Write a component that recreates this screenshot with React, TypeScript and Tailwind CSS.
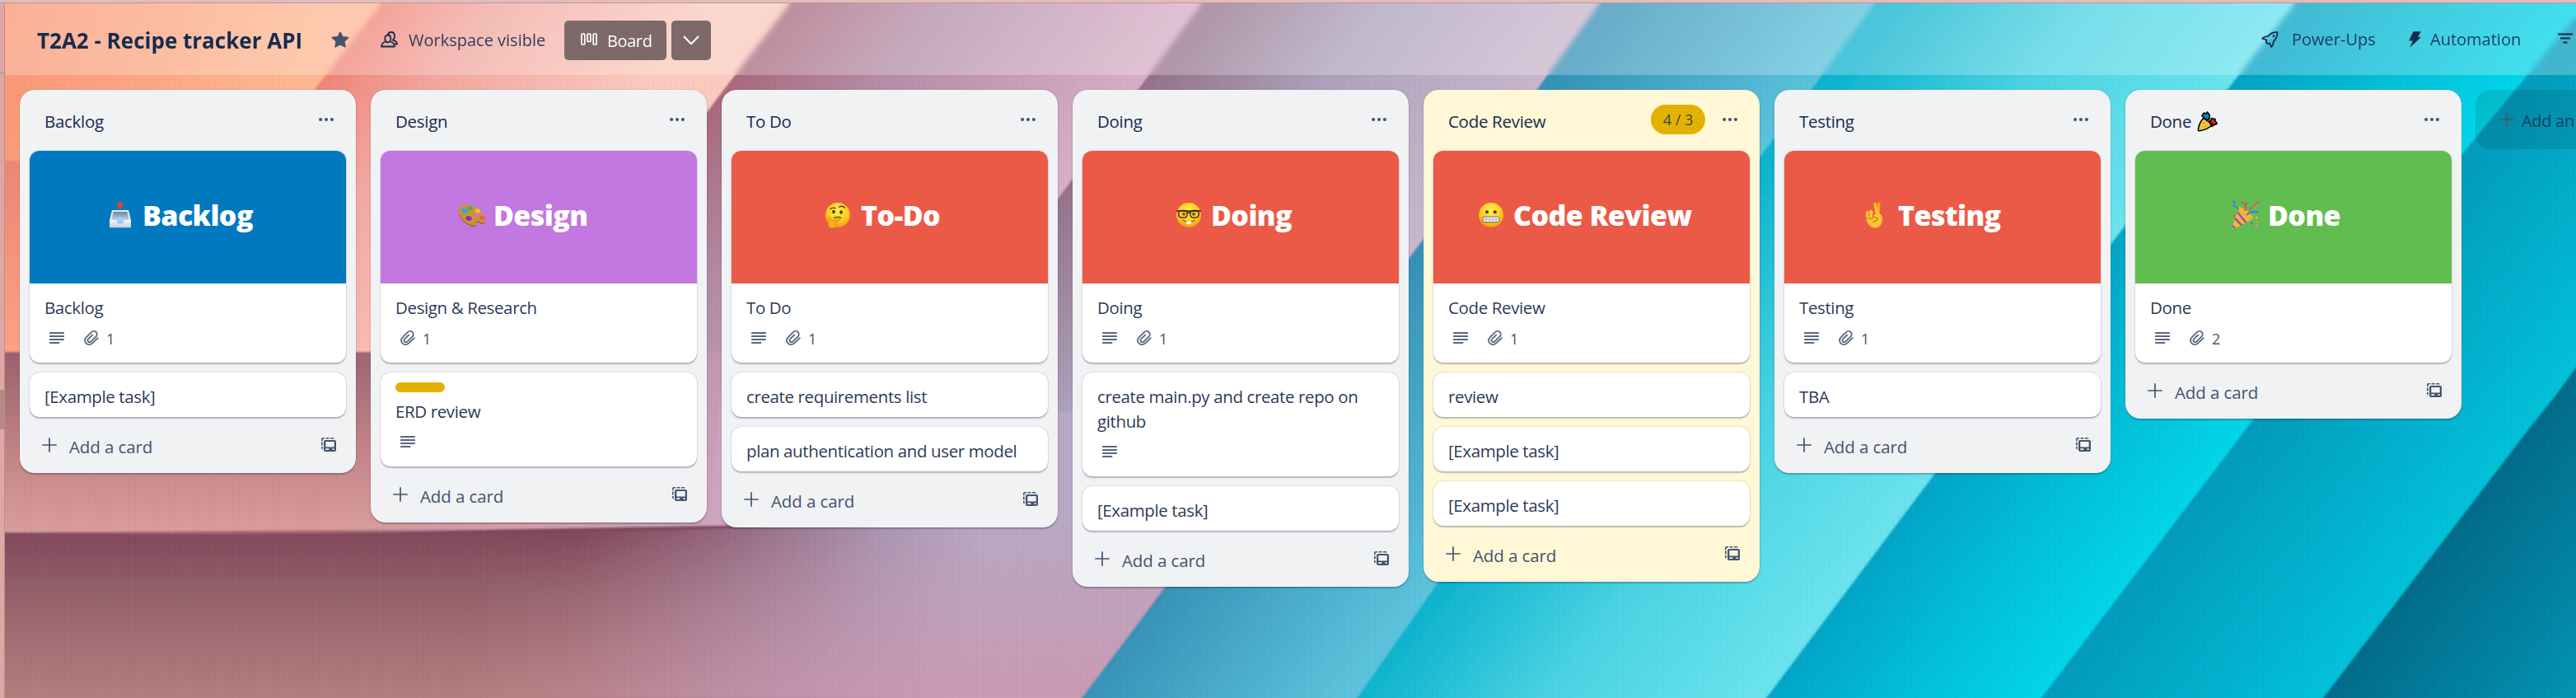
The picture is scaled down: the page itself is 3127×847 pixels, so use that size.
import React from "react";

type CoverName = "inbox" | "palette" | "think" | "nerd" | "grimace" | "fingers" | "party";

interface CardData {
  text: string;
  cover?: { bg: string; label: string; emoji: CoverName; pad: string; gap: string };
  label?: boolean;
  desc?: boolean;
  attachments?: number;
}

interface ListData {
  title: string;
  warn?: boolean;
  badge?: string;
  party?: boolean;
  cards: CardData[];
}

const LISTS: ListData[] = [
  {
    title: "Backlog",
    cards: [
      { text: "Backlog", desc: true, attachments: 1, cover: { bg: "bg-[#0079bf]", label: "Backlog", emoji: "inbox", pad: "pl-[93px]", gap: "gap-[10px]" } },
      { text: "[Example task]" },
    ],
  },
  {
    title: "Design",
    cards: [
      { text: "Design & Research", attachments: 1, cover: { bg: "bg-[#c377e0]", label: "Design", emoji: "palette", pad: "pl-[93px]", gap: "gap-[10px]" } },
      { text: "ERD review", label: true, desc: true },
    ],
  },
  {
    title: "To Do",
    cards: [
      { text: "To Do", desc: true, attachments: 1, cover: { bg: "bg-[#eb5a46]", label: "To-Do", emoji: "think", pad: "pl-[112px]", gap: "gap-[11px]" } },
      { text: "create requirements list" },
      { text: "plan authentication and user model" },
    ],
  },
  {
    title: "Doing",
    cards: [
      { text: "Doing", desc: true, attachments: 1, cover: { bg: "bg-[#eb5a46]", label: "Doing", emoji: "nerd", pad: "pl-[112px]", gap: "gap-[10px]" } },
      { text: "create main.py and create repo on github", desc: true },
      { text: "[Example task]" },
    ],
  },
  {
    title: "Code Review",
    warn: true,
    badge: "4 / 3",
    cards: [
      { text: "Code Review", desc: true, attachments: 1, cover: { bg: "bg-[#eb5a46]", label: "Code Review", emoji: "grimace", pad: "pl-[53px]", gap: "gap-[10px]" } },
      { text: "review" },
      { text: "[Example task]" },
      { text: "[Example task]" },
    ],
  },
  {
    title: "Testing",
    cards: [
      { text: "Testing", desc: true, attachments: 1, cover: { bg: "bg-[#eb5a46]", label: "Testing", emoji: "fingers", pad: "pl-[92px]", gap: "gap-[12px]" } },
      { text: "TBA" },
    ],
  },
  {
    title: "Done",
    party: true,
    cards: [
      { text: "Done", desc: true, attachments: 2, cover: { bg: "bg-[#61bd4f]", label: "Done", emoji: "party", pad: "pl-[117px]", gap: "gap-[10px]" } },
    ],
  },
];

function Emoji({ name }: { name: CoverName }) {
  const cls = "h-[34px] w-[34px] shrink-0";
  switch (name) {
    case "inbox":
      return (
        <svg className={cls} viewBox="0 0 34 34">
          <defs>
            <linearGradient id="in-a" x1="0" y1="0" x2="0" y2="1"><stop offset="0" stopColor="#6c8196" /><stop offset="1" stopColor="#c6dcf2" /></linearGradient>
            <linearGradient id="in-b" x1="0" y1="0" x2="0" y2="1"><stop offset="0" stopColor="#f4f6f8" /><stop offset="1" stopColor="#c9ced4" /></linearGradient>
          </defs>
          <path d="M7 11h20l3 12v9H4v-9z" fill="#e4e8ec" />
          <path d="M8.6 13h16.800l2.200 10.500H6.400z" fill="url(#in-a)" />
          <path d="M4 23h8.500c.6 3 2.200 4.600 4.500 4.600s4-1.600 4.500-4.600H30v9.200H4z" fill="url(#in-b)" />
          <circle cx="17" cy="24" r="4.400" fill="#a9cdf3" />
          <path d="M14.300 1h5v3.800h2.900L17 9.800l-5.200-5h2.500z" fill="#e0432d" />
        </svg>
      );
    case "palette":
      return (
        <svg className={cls} viewBox="0 0 34 34">
          <path d="M2 9C5 4 13 4 20 6.500S34 17 34 24c0 3-4 3.500-7 1.500-2.500-1.600-4.500-.5-4 1.500.6 2.300-2 3.400-5.500 2.500C9 27 0 17 2 9z" fill="#7c5518" transform="translate(0,1)" />
          <path d="M2 9C5 4 13 4 20 6.500S34 17 34 24c0 3-4 3.500-7 1.500-2.500-1.600-4.500-.5-4 1.500.6 2.300-2 3.400-5.500 2.500C9 27 0 17 2 9z" fill="#cf9233" />
          <circle cx="24" cy="18" r="2.400" fill="#c377e0" />
          <ellipse cx="9" cy="12" rx="4" ry="2.900" fill="#27a9dd" transform="rotate(25 9 12)" />
          <ellipse cx="15.500" cy="8.500" rx="3.300" ry="2.600" fill="#2fbf3f" />
          <ellipse cx="25" cy="12" rx="3.300" ry="2.500" fill="#f1c22c" transform="rotate(25 25 12)" />
          <ellipse cx="30" cy="20" rx="3" ry="2.500" fill="#ef5a4a" />
          <ellipse cx="14" cy="21" rx="3.800" ry="2.800" fill="#8a2fc4" transform="rotate(20 14 21)" />
        </svg>
      );
    case "think":
    case "nerd":
    case "grimace":
      return (
        <svg className={cls} viewBox="0 0 34 34">
          <defs>
            <radialGradient id={"face-" + name} cx=".5" cy=".35" r=".65"><stop offset="0" stopColor="#ffee50" /><stop offset=".65" stopColor="#fdcb1e" /><stop offset="1" stopColor="#f09a13" /></radialGradient>
          </defs>
          <circle cx="17" cy="17" r="15" fill={"url(#face-" + name + ")"} />
          {name === "think" && (
            <g>
              <ellipse cx="12" cy="13" rx="1.800" ry="2.300" fill="#5b3210" />
              <ellipse cx="21" cy="13.500" rx="1.800" ry="2.300" fill="#5b3210" />
              <path d="M8 9.500c1.500-1.300 4-1.700 6-.8M18.500 7.200c2.500-1.400 5.200-1 6.800.8" stroke="#5b3210" strokeWidth="1.300" fill="none" strokeLinecap="round" />
              <path d="M12.500 20.500c3-1.600 6-1.400 8.500 0" stroke="#5b3210" strokeWidth="1.200" fill="none" strokeLinecap="round" />
              <path d="M5.500 21.500c-.3-2 2.300-2.600 3 0l.6 2.500 8.500-2.600c2.200-.4 2.800 1.800 1 2.500l-4.400 1.700c2.500.6 2 5.400-1.500 6.600-5 1.600-7.600-1.200-7.300-5z" fill="#fbb01c" stroke="#d9820c" strokeWidth=".9" />
            </g>
          )}
          {name === "nerd" && (
            <g>
              <rect x="4.800" y="11.500" width="10.400" height="8.600" rx="3.800" fill="#fbc83c" stroke="#2d2418" strokeWidth="1.400" />
              <rect x="18.800" y="11.500" width="10.400" height="8.600" rx="3.800" fill="#fbc83c" stroke="#2d2418" strokeWidth="1.400" />
              <path d="M2 12h30M15 14h4" stroke="#2d2418" strokeWidth="1.400" />
              <circle cx="11" cy="15.800" r="2" fill="#8a5018" />
              <circle cx="23" cy="15.800" r="2" fill="#8a5018" />
              <path d="M9.500 23c4 3.300 11 3.300 15 0" stroke="#a0601c" strokeWidth="1.100" fill="none" strokeLinecap="round" />
              <rect x="14.200" y="24.500" width="5.600" height="3.600" rx=".8" fill="#fff" />
            </g>
          )}
          {name === "grimace" && (
            <g>
              <circle cx="12" cy="13.200" r="2" fill="#5b3210" />
              <circle cx="21.800" cy="13.200" r="2" fill="#5b3210" />
              <rect x="6.800" y="19" width="20.400" height="6.600" rx="2.800" fill="#f4f4f4" stroke="#85786c" strokeWidth="1.100" />
              <path d="M7 22.300h20M11 19v6.500M15 19v6.500M19 19v6.500M23 19v6.500" stroke="#a9a39c" strokeWidth=".8" />
            </g>
          )}
        </svg>
      );
    case "fingers":
      return (
        <svg className={cls} viewBox="0 0 34 34">
          <path d="M19 15l2.200-12c.4-2.200 3.300-2 3.200.4L23.800 17z" fill="#f3a81d" />
          <path d="M16.300 3.300c-.2-2.100 2.400-2.700 3.200-.9l5 14.600-5.500 2z" fill="#fbc02f" stroke="#d88d13" strokeWidth=".6" />
          <path d="M7 14c0-2.200 3.800-2.200 4 0v2.500c.3-1.300 0-3.500 0-4 .2-2.300 4-2.300 4.300 0l.6 4.500c5-2 10-2.500 10.800 1.500.8 5-.5 9.500-3 12-3.500 2.800-9 2.500-12-.5C8.500 27 7 22 7 14z" fill="#fcc534" />
          <path d="M11 15v4M15.500 16l.3 3M8 20.500c3 1.500 5.500 1.500 8-.5 3-1 5 0 5.500 1.800-1.300 2-3.600 2.200-5.500 3.700" stroke="#c47a10" strokeWidth="1.200" fill="none" strokeLinecap="round" />
        </svg>
      );
    case "party":
      return (
        <svg className={cls} viewBox="0 0 34 34">
          <defs><clipPath id="cone"><path d="M9 7c7 2 15 8 17.500 13.500C20 26 8 31 2 33.500c-1.300.4-1.600-.2-1.500-1.500z" /></clipPath></defs>
          <g clipPath="url(#cone)">
            <path d="M0 0h34v34H0z" fill="#f4b52e" />
            <path d="M2 19l12 12M5 11l14 17M-2 27l9 9" stroke="#9a4fc9" strokeWidth="2.600" />
          </g>
          <path d="M18 17c4-4 9-4.500 15-4" stroke="#3a84dd" strokeWidth="2.200" fill="none" />
          <path d="M16 12c2-5 1-9-4-11" stroke="#e84a6a" strokeWidth="2" fill="none" />
          <path d="M22 12c0-4 3-3 3.500-5.500S29 6 29 3.500 32 3 33 1" stroke="#e84a6a" strokeWidth="1.500" fill="none" />
          <path d="M1 1c3-.5 4 1.500 2.500 3S2 7 5 7s2 3 4 3" stroke="#3a84dd" strokeWidth="1.600" fill="none" />
          <g>
            <circle cx="18" cy="3" r="1.300" fill="#3a84dd" /><circle cx="3" cy="18" r="1.300" fill="#e84a6a" />
            <circle cx="30" cy="20" r="1.300" fill="#e8d23a" /><circle cx="24" cy="27" r="1.300" fill="#3a84dd" />
            <circle cx="30" cy="30" r="1.500" fill="#f08aa8" /><circle cx="30" cy="25" r="1.200" fill="#f08a3a" />
          </g>
        </svg>
      );
  }
}

const PartyGlyph = () => (
  <svg className="ml-[7px] h-[25px] w-[25px]" viewBox="0 0 25 25">
    <path d="M7.500 8.500c4 1.500 9 5.500 10 9-4 3.500-9.500 5.500-14.500 6.300-1.300.1-1.700-.6-1.600-1.600C2 17 4.500 12 7.500 8.500z" fill="#fcc03a" stroke="#000" strokeWidth="1.600" strokeLinejoin="round" />
    <path d="M9 8.500L5.800 5.500 8.500 2l2.500 1L12.500.8l3 4.200-.6 4-3.400 1.500z" fill="#157fa8" stroke="#000" strokeWidth="1.500" strokeLinejoin="round" />
    <path d="M15.500 13.500l2-5 4.500 1 .4 2.500 2 3-4.400 2.200z" fill="#cc2412" stroke="#000" strokeWidth="1.500" strokeLinejoin="round" />
    <path d="M11 11l3.500-1.500 1.500 4zM17 16.500l2.500 1-1.500 1.700z" fill="#7a4fb0" stroke="#000" strokeWidth="1" />
    <circle cx="8.500" cy="14" r="1" fill="#f07a30" /><circle cx="10" cy="18" r="1" fill="#6cc0a0" />
  </svg>
);

const Dots = () => (
  <svg className="h-[6px] w-[18px]" viewBox="0 0 18 6" fill="#44546f">
    <circle cx="2.100" cy="3" r="2.100" /><circle cx="9" cy="3" r="2.100" /><circle cx="15.900" cy="3" r="2.100" />
  </svg>
);

const DescIcon = () => (
  <svg className="h-[16px] w-[18px]" viewBox="0 0 18 16" stroke="#596780" strokeWidth="1.900" strokeLinecap="round">
    <path d="M.9 2h16.200M.9 6h16.200M.9 10h16.200M.9 14h10.600" />
  </svg>
);

const ClipIcon = () => (
  <svg className="h-[18px] w-[18px]" viewBox="0 0 18 18" fill="none" stroke="#596780" strokeWidth="1.800" strokeLinecap="round">
    <path d="M16.800 9.200l-6.500 6.200c-2.300 2.200-5.700 2.400-7.800.3s-1.900-5.400.3-7.600l5.900-5.800c1.700-1.700 4.300-1.900 5.900-.4s1.500 4-.2 5.700l-5.900 5.700c-1 1-2.500 1.100-3.400.2s-.8-2.300.2-3.300L10.200 5.500" />
  </svg>
);

const Plus = () => (
  <svg className="h-[18px] w-[18px] shrink-0" viewBox="0 0 18 18" stroke="#44546f" strokeWidth="1.700" strokeLinecap="round">
    <path d="M9 .9v16.200M.9 9h16.200" />
  </svg>
);

const TemplateIcon = () => (
  <svg className="h-[18px] w-[18px]" viewBox="0 0 18 18" fill="#44546f">
    <path fillRule="evenodd" d="M5 3h11a2 2 0 0 1 2 2v10a2 2 0 0 1-2 2H5a2 2 0 0 1-2-2V5a2 2 0 0 1 2-2zm.3 2v6.400h10.400V5zm0 8.300v1.700h4v-1.700zm8.200 0v1.700h2.200v-1.700z" />
    <path d="M0 4V2a2 2 0 0 1 2-2h2v1.600H1.700V4zM5.500 0h4v1.600h-4zM11 0h3a2 2 0 0 1 1.900 1.600H11zM0 5.500h1.700v4H0zM0 11h1.700v3.500A2 2 0 0 1 0 12.800z" />
  </svg>
);

function Card({ card }: { card: CardData }) {
  const meta = card.desc || card.attachments;
  return (
    <div className="flex w-[384px] flex-col overflow-hidden rounded-[12px] bg-white shadow-[0_1.500px_1.500px_#091e4240,0_0_1.500px_#091e424f]">
      {card.cover && (
        <div className={"flex h-[161px] items-center pb-[5px] " + card.cover.bg + " " + card.cover.pad + " " + card.cover.gap}>
          <Emoji name={card.cover.emoji} />
          <span className="text-[34px] leading-[40px] font-extrabold tracking-[-0.6px] whitespace-nowrap text-white">{card.cover.label}</span>
        </div>
      )}
      <div className={"flex flex-col pr-[16px] pl-[18px] pt-[12px] " + (meta ? "pb-[6px]" : "pb-[12px]")}>
        {card.label && <span className="mb-[6px] h-[12px] w-[60px] rounded-full bg-[#e2b203]" />}
        <p className="text-[20.5px] leading-[30px] tracking-[-0.38px] text-[#172b4d]/95"><span className="relative top-[2px]">{card.text}</span></p>
        {meta && (
          <div className="flex h-[48px] items-center gap-[24px] pl-[6px]">
            {card.desc && <DescIcon />}
            {card.attachments && (
              <span className="flex items-center gap-[9px] text-[18px] leading-[24px] text-[#44546f]">
                <ClipIcon />
                <span className="pt-[2px]">{card.attachments}</span>
              </span>
            )}
          </div>
        )}
      </div>
    </div>
  );
}

function List({ list }: { list: ListData }) {
  return (
    <section className={"flex w-[408px] shrink-0 flex-col rounded-[18px] px-[12px] shadow-[0_1.500px_1.500px_#091e4240,0_0_1.500px_#091e424f] " + (list.warn ? "bg-[#fff7d6]" : "bg-[#f1f2f4]")}>
      <header className="flex h-[74px] items-center pr-[15px] pb-[3px] pl-[18px]">
        <h2 className="flex flex-1 items-center pt-[5px] text-[20.5px] leading-[30px] font-medium tracking-[-0.3px] text-[#172b4d]">
          {list.title}
          {list.party && <PartyGlyph />}
        </h2>
        {list.badge && (
          <span className="mt-px mr-[21px] flex h-[36px] w-[66px] items-center justify-center rounded-full bg-[#e2b203] text-[18px] text-[#172b4d]/85">{list.badge}</span>
        )}
        <Dots />
      </header>
      <div className="flex flex-col gap-[12px]">
        {list.cards.map((c, i) => (
          <Card key={i} card={c} />
        ))}
      </div>
      <footer className="flex h-[68px] items-center pr-[12px] pl-[15px]">
        <Plus />
        <span className="ml-[15px] flex-1 pt-[4px] text-[20.5px] leading-[30px] tracking-[-0.1px] text-[#44546f]">Add a card</span>
        <TemplateIcon />
      </footer>
    </section>
  );
}

function Wallpaper() {
  return (
    <svg className="absolute inset-0 h-[847px] w-[3127px]" viewBox="0 0 3127 847" preserveAspectRatio="none">
      <defs>
        <linearGradient id="w0" gradientUnits="userSpaceOnUse" x1="0" y1="0" x2="360" y2="120"><stop offset="0" stopColor="#f99472" /><stop offset="1" stopColor="#feb792" /></linearGradient>
        <linearGradient id="w1" gradientUnits="userSpaceOnUse" x1="383" y1="108" x2="640" y2="300"><stop offset="0" stopColor="#f08476" /><stop offset=".35" stopColor="#f2a69f" /><stop offset="1" stopColor="#fbc9bd" /></linearGradient>
        <linearGradient id="w2" gradientUnits="userSpaceOnUse" x1="879" y1="108" x2="1192" y2="352"><stop offset="0" stopColor="#a9677c" /><stop offset=".35" stopColor="#b28ba4" /><stop offset="1" stopColor="#d7aec6" /></linearGradient>
        <linearGradient id="w3" gradientUnits="userSpaceOnUse" x1="1382" y1="108" x2="1683" y2="342"><stop offset="0" stopColor="#937089" /><stop offset=".45" stopColor="#aca0ba" /><stop offset="1" stopColor="#c8b6cd" /></linearGradient>
        <linearGradient id="w4" gradientUnits="userSpaceOnUse" x1="1866" y1="108" x2="2073" y2="269"><stop offset="0" stopColor="#338fb5" /><stop offset="1" stopColor="#5ac2db" /></linearGradient>
        <linearGradient id="w5" gradientUnits="userSpaceOnUse" x1="2199" y1="108" x2="2513" y2="353"><stop offset="0" stopColor="#06b0cc" /><stop offset=".5" stopColor="#48d2e2" /><stop offset="1" stopColor="#68e3ee" /></linearGradient>
        <linearGradient id="w6" gradientUnits="userSpaceOnUse" x1="2704" y1="108" x2="2921" y2="278"><stop offset="0" stopColor="#00a2c4" /><stop offset=".5" stopColor="#04bdd6" /><stop offset="1" stopColor="#04d5e9" /></linearGradient>
        <linearGradient id="w7" gradientUnits="userSpaceOnUse" x1="2736" y1="508" x2="2960" y2="683"><stop offset="0" stopColor="#0099bb" /><stop offset="1" stopColor="#04c2da" /></linearGradient>
        <linearGradient id="w8" gradientUnits="userSpaceOnUse" x1="2950" y1="680" x2="3127" y2="818"><stop offset="0" stopColor="#006a89" /><stop offset="1" stopColor="#0090b0" /></linearGradient>
        <linearGradient id="left" gradientUnits="userSpaceOnUse" x1="0" y1="195" x2="0" y2="427"><stop offset="0" stopColor="#ee8573" /><stop offset="1" stopColor="#fba183" /></linearGradient>
        <linearGradient id="mid" gradientUnits="userSpaceOnUse" x1="0" y1="427" x2="0" y2="645"><stop offset="0" stopColor="#98606c" /><stop offset=".6" stopColor="#c58587" /><stop offset="1" stopColor="#d99c99" /></linearGradient>
        <linearGradient id="midr" gradientUnits="userSpaceOnUse" x1="400" y1="0" x2="1000" y2="0"><stop offset="0" stopColor="#cda0bc" stopOpacity="0" /><stop offset="1" stopColor="#cda6c4" /></linearGradient>
        <linearGradient id="fold" gradientUnits="userSpaceOnUse" x1="0" y1="645" x2="0" y2="847"><stop offset="0" stopColor="#80475a" /><stop offset=".35" stopColor="#925f69" /><stop offset="1" stopColor="#b57d7e" /></linearGradient>
        <linearGradient id="foldr" gradientUnits="userSpaceOnUse" x1="700" y1="660" x2="1180" y2="720"><stop offset="0" stopColor="#a67c98" stopOpacity="0" /><stop offset=".75" stopColor="#ab94b0" /><stop offset="1" stopColor="#b9a7c2" /></linearGradient>
        <linearGradient id="pink" gradientUnits="userSpaceOnUse" x1="0" y1="640" x2="0" y2="847"><stop offset="0" stopColor="#cb9ab4" stopOpacity="0" /><stop offset="1" stopColor="#cb97b0" stopOpacity=".9" /></linearGradient>
        <linearGradient id="pinkx" gradientUnits="userSpaceOnUse" x1="550" y1="0" x2="1080" y2="0"><stop offset="0" stopColor="#000" /><stop offset="1" stopColor="#fff" /></linearGradient>
        <mask id="pinkm"><path d="M0 0h3127v847H0z" fill="url(#pinkx)" /></mask>
        <filter id="soft"><feGaussianBlur stdDeviation="0.800" /></filter>
        <pattern id="weave" width="7" height="6" patternUnits="userSpaceOnUse">
          <path d="M1 0v6M4.500 0v6" stroke="#fff" strokeOpacity=".03" /><path d="M2.500 0v6" stroke="#000" strokeOpacity=".02" />
        </pattern>
      </defs>
      <g filter="url(#soft)">
        <path d="M-10-10H480L382 108 300 200H-10z" fill="url(#w0)" />
        <path d="M474-10H980L968 4 868 136 620 440H-10V195H310L382 108z" fill="url(#w1)" />
        <path d="M-10 195H60V430H-10z" fill="url(#left)" />
        <path d="M970-10H1480L1469 4 1392 108 1295 240 810 860H-10V427H630L858 136 879 108 959 4z" fill="url(#w2)" />
        <path d="M-10 427H880L860 640-10 646z" fill="url(#mid)" />
        <path d="M400 427H900V646H400z" fill="url(#midr)" />
        <path d="M1470-10H1962L1951 4 1876 108 1730 300 1425 712 1315 860H800L990 636 1285 240 1382 108 1459 4z" fill="url(#w3)" />
        <path d="M-10 646Q300 650 500 645T992 636L1470 640 1305 860H-10z" fill="url(#fold)" />
        <path d="M500 645Q800 648 992 636L1100 500H1570L1305 860H500z" fill="url(#foldr)" />
        <path d="M400 636H1475L1305 860H400z" fill="url(#pink)" mask="url(#pinkm)" />
        <path d="M1952-10H2300L2285 4 2209 108 2164 167 1758 703 1650 860H1303L1415 712 1720 300 1866 108z" fill="url(#w4)" />
        <path d="M2286-10H2807L2796 4 2714 108 2590 273 2359 574 2144 860H1638L1748 703 2154 167 2199 108z" fill="url(#w5)" />
        <path d="M2797-10H3140V860H2134L2349 574 2580 273 2704 108z" fill="url(#w6)" />
        <path d="M3140 4L3054 108 2988 188 2736 508 2468 860H3140z" fill="url(#w7)" />
        <path d="M3140 428L3102 480 3070 520 2810 860H3140z" fill="url(#w8)" />
      </g>
      <path d="M0 0h3127v847H0z" fill="url(#weave)" />
    </svg>
  );
}

export default function App() {
  return (
    <div className="relative flex h-[847px] w-full flex-col overflow-hidden font-['Open_Sans','Noto_Sans',sans-serif]">
      <Wallpaper />
      <div className="relative h-[4px] shrink-0 border-b border-[#b9989c] bg-[#e4bcba]" />
      <div className="relative flex min-h-0 flex-1">
        <div className="flex w-[6px] shrink-0 flex-col justify-between border-r border-[#c08a8c] bg-[#dea7a4]">
          <div className="h-[85px] border-b border-[#b58a94]" />
          <div className="mb-[326px] h-[48px] bg-[#b58a87]" />
        </div>
        <div className="flex min-w-0 flex-1 flex-col">
          <header className="flex h-[87px] shrink-0 items-center bg-white/25 pl-[39px] backdrop-blur-[3px]">
            <h1 className="w-[357px] pt-[2px] text-[26px] leading-[36px] font-bold whitespace-nowrap text-[#172b4d]">T2A2 - Recipe tracker API</h1>
            <svg className="h-[20px] w-[22px]" viewBox="0 0 22 20" fill="#44546f" stroke="#44546f" strokeWidth="1.500" strokeLinejoin="round">
              <path d="M11 1.200l2.900 5.600 6.800.8-4.900 4.500 1.200 6.700L11 15.900l-6 2.900 1.200-6.700L1.300 7.600l6.800-.8z" />
            </svg>
            <svg className="ml-[38px] h-[20px] w-[21px]" viewBox="0 0 21 20" fill="none" stroke="#172b4d" strokeWidth="1.800" strokeLinejoin="round">
              <path d="M12.300 8.800c0 2.600-1.500 4.700-3.500 4.700s-3.500-2.100-3.500-4.700 1.300-4.300 3.500-4.300 3.500 1.700 3.500 4.300z" />
              <path d="M6 12.500C2.500 13.500 1.200 15.500 1 18.500h16c-.1-3-1.800-5-5.300-6" />
              <path d="M8.800 4.300C9.300 2 11 1 12.800 1c2.600 0 4.200 2 4.200 5 0 2-.9 3.700-2.200 4.700 3.300.8 5 2.400 5.200 5h-3.500" />
            </svg>
            <span className="ml-[13px] w-[189px] pt-[2px] text-[20px] whitespace-nowrap text-[#172b4d]/90">Workspace visible</span>
            <div className="mt-[2px] flex gap-[6px]">
              <div className="flex h-[48px] w-[124px] items-center rounded-[5px] bg-[#7d6a68] pl-[20px] text-white">
                <svg className="mb-[2px] h-[16px] w-[20px]" viewBox="0 0 20 16" fill="none" stroke="#fff" strokeWidth="1.700">
                  <rect x="1" y="1" width="3.800" height="13" rx="1" /><rect x="8.100" y="1" width="3.800" height="9.500" rx="1" /><rect x="15.200" y="1" width="3.800" height="13" rx="1" />
                </svg>
                <span className="ml-[12px] pt-[2px] text-[20px] tracking-[-0.4px]">Board</span>
              </div>
              <div className="flex h-[48px] w-[48px] items-center justify-center rounded-[5px] bg-[#7d6a68]">
                <svg className="h-[12px] w-[20px]" viewBox="0 0 20 12" fill="none" stroke="#fff" strokeWidth="2" strokeLinecap="round" strokeLinejoin="round"><path d="M1.500 1.500L10 10.200l8.500-8.700" /></svg>
              </div>
            </div>
            <div className="flex-1" />
            <div className="flex w-[382px] shrink-0 items-center text-[20px] whitespace-nowrap text-[#172b4d]/90">
              <svg className="h-[20px] w-[21px] shrink-0" viewBox="0 0 21 20" fill="none" stroke="#172b4d" strokeWidth="1.800" strokeLinejoin="round">
                <path d="M1.200 8.700C3.500 6.700 5.600 6 8 6.200 11 2.500 15 .8 19.300 1.200c.4 4.600-1.600 8.400-4.600 11.300.3 2.500-.7 4.700-2.700 6.500l-1.800-4.600-3 .6-1.400-1.700.8-2.800z" /><circle cx="15" cy="5.700" r=".5" />
              </svg>
              <span className="ml-[16px] w-[142px]">Power-Ups</span>
              <svg className="h-[20px] w-[15px] shrink-0" viewBox="0 0 15 20" fill="#172b4d"><path d="M5.500.3h9L11.300 7H15L1.200 19.700l3.600-8.200H.2z" /></svg>
              <span className="ml-[11px] w-[155px]">Automation</span>
              <svg className="mb-[3px] h-[13px] w-[18px] shrink-0" viewBox="0 0 18 13" stroke="#172b4d" strokeWidth="1.900"><path d="M0 1.500h18M3 6.500h12M6.500 11.500h5" /></svg>
            </div>
          </header>
          <main className="flex items-start gap-[18px] pt-[18px] pl-[18px]">
            {LISTS.map((l) => (
              <List key={l.title} list={l} />
            ))}
            <div className="-ml-px flex h-[72px] w-[122px] shrink-0 items-center rounded-l-[18px] bg-black/10 pl-[29px] text-[20px] tracking-[-0.3px] whitespace-nowrap text-[#172b4d]/80">
              <Plus />
              <span className="ml-[9px] pt-[3px]">Add an</span>
            </div>
          </main>
        </div>
      </div>
    </div>
  );
}
